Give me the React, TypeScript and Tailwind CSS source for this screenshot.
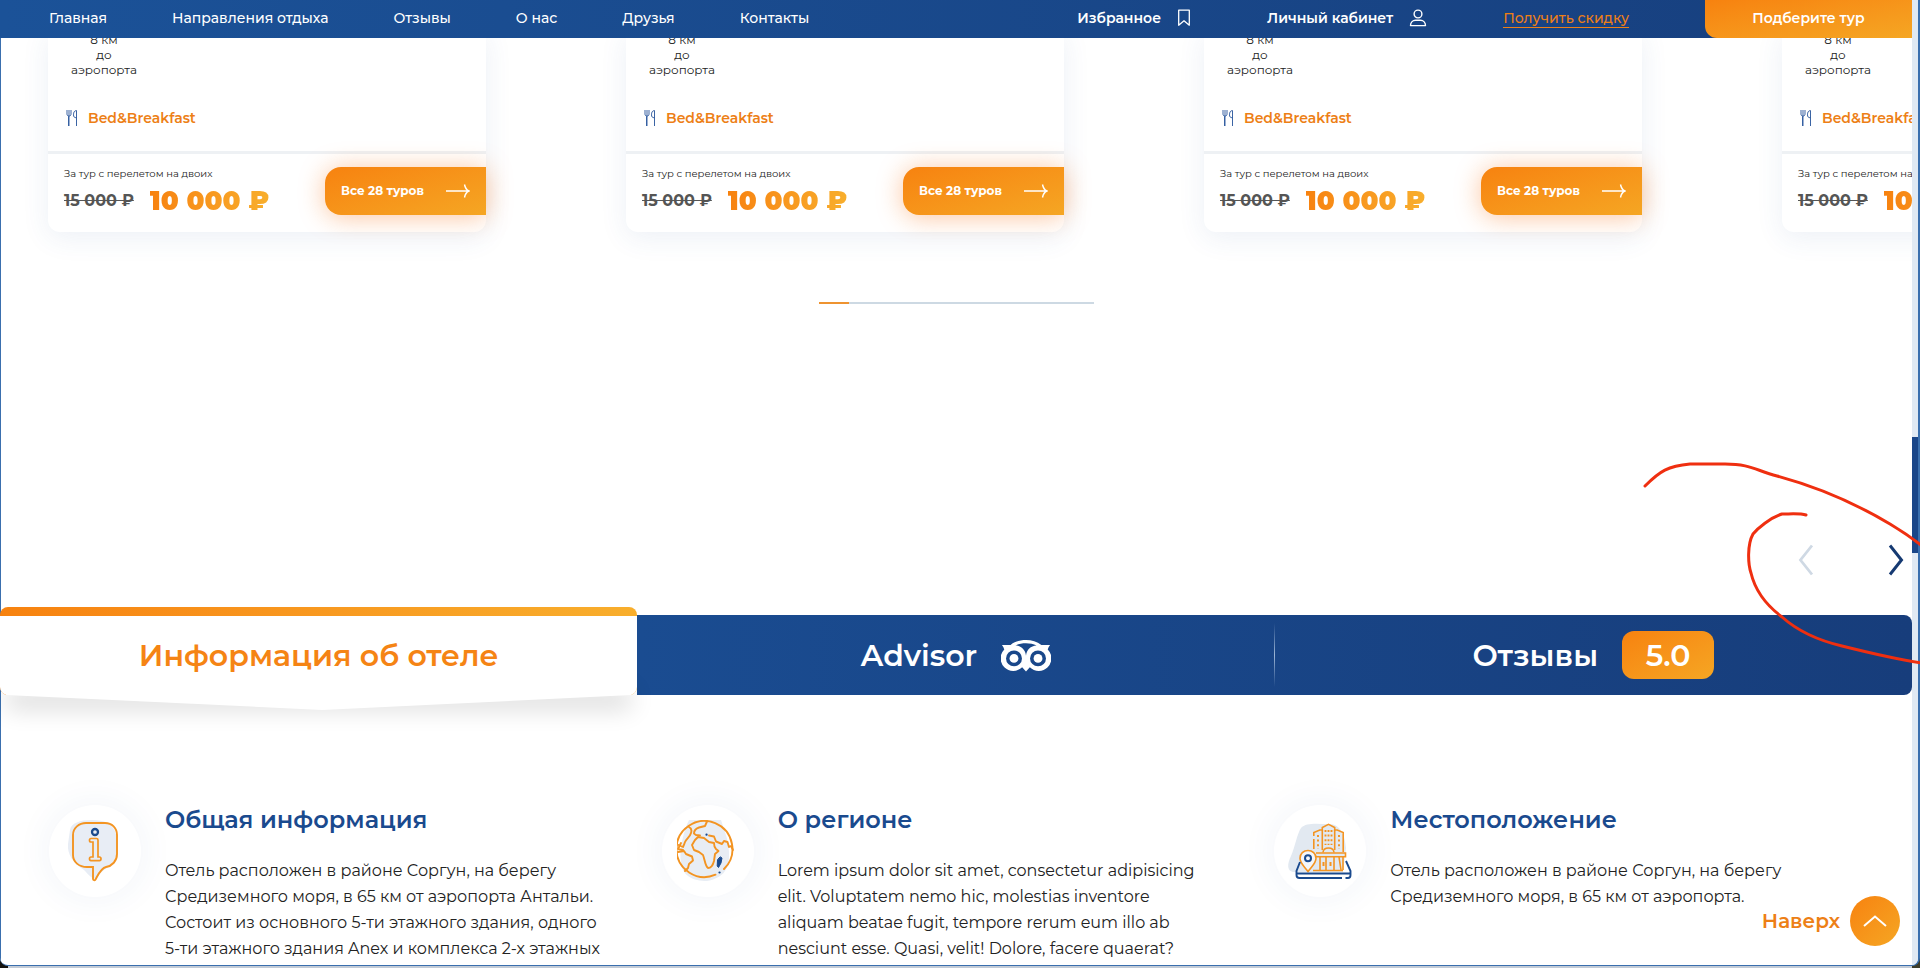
import type { ReactNode } from "react";

const NAV = ["Главная", "Направления отдыха", "Отзывы", "О нас", "Друзья", "Контакты"];

const GRADIENT = "bg-gradient-to-br from-[#f7820f] to-[#f5a623]";

function BookmarkIcon() {
  return (
    <svg className="h-[18px] w-[14px]" viewBox="0 0 14 18" fill="none" stroke="#fff" strokeWidth="1.3">
      <path d="M1.7 1.2h10.6v15L7 11.8 1.7 16.2z" strokeLinejoin="round" />
    </svg>
  );
}

function UserIcon() {
  return (
    <svg className="h-[18px] w-[18px]" viewBox="0 0 18 18" fill="none" stroke="#fff" strokeWidth="1.4">
      <circle cx="9" cy="5" r="3.9" />
      <path d="M1.5 16.6c0-3.4 2.4-5.4 5-5.4h5c2.6 0 5 2 5 5.4z" strokeLinejoin="round" />
    </svg>
  );
}

function CutleryIcon() {
  return (
    <svg className="h-4 w-3" viewBox="0 0 12 18" preserveAspectRatio="none" fill="none" stroke="#2f5a9e" strokeWidth="1">
      <path d="M1 0v4.500c0 1.500.7 2.300 2 2.300s2-.8 2-2.300V0M3 0v18M2.500 7v11" />
      <path d="M10.500 18V.6C8.300.8 7.500 2.500 7.500 5.500c0 2.200.8 3.200 3 3.200" />
    </svg>
  );
}

function ArrowIcon() {
  return (
    <svg className="h-[14px] w-6" viewBox="0 0 24 14" fill="none" stroke="#fff" strokeWidth="1.4">
      <path d="M0 7h22.500M18.500.5c.6 3.200 2 5.500 4.500 6.500-2.500 1-3.900 3.300-4.500 6.500" />
    </svg>
  );
}

function OwlIcon() {
  return (
    <svg className="h-[33px] w-[50px]" viewBox="0 0 52 34">
      <path fill="#fff" d="M1 6h9C14.500 2.500 20 .8 26 .8S37.500 2.500 42 6h9c-1.200 1.600-2 3-2.400 4.700A13 13 0 0 1 30 29.200L26 33.600l-4-4.400A13 13 0 0 1 3.400 10.700C3 9 2.200 7.600 1 6z" />
      <path fill="#19478a" d="M15 6.600C18.300 5 22 4.300 26 4.300s7.700.7 11 2.300c-6.100.2-10.500 4.800-11 10.600C25.500 11.400 21.100 6.800 15 6.600z" />
      <circle cx="13.500" cy="20" r="8.300" fill="#19478a" />
      <circle cx="38.500" cy="20" r="8.300" fill="#19478a" />
      <circle cx="13.500" cy="20" r="4.600" fill="#fff" />
      <circle cx="38.500" cy="20" r="4.600" fill="#fff" />
    </svg>
  );
}

function InfoIcon() {
  return (
    <svg className="h-[62px] w-[62px]" viewBox="0 0 62 62" fill="none" stroke="#f39422" strokeWidth="1.900">
      <path d="M6 10C7 3 16 0 28 0s21 3 24 14c3 12 2 24-6 32-4 3-9 5-13 12-4 3-9-4-13-8C9 43 3 34 4 24z" fill="#e8edf5" stroke="none" />
      <path d="M22 3h19c7 0 12 5 12 12v19c0 7-5 12-11 13-5 1-8 8-10.500 12.500-.8 1.200-2.500.9-2.500-.7V47h-6C15 47 9 42 9 35V15C9 8 15 3 22 3z" />
      <circle cx="31" cy="12" r="3" stroke="#1a4a8e" strokeWidth="2.300" />
      <path d="M27 18.500h5.500c1 0 1.500.5 1.500 1.500v17h1.500c2 0 2 3.700 0 3.700h-8.500c-2 0-2-3.700 0-3.700H29V22h-2c-2 0-2-3.500 0-3.500z" strokeWidth="1.700" />
    </svg>
  );
}

function GlobeIcon() {
  return (
    <svg className="h-[62px] w-[62px]" viewBox="0 0 62 62" fill="none" stroke="#f39422" strokeWidth="1.900" strokeLinecap="round" strokeLinejoin="round">
      <path d="M12 0h32c3 10 9 22 8 38-1 12-6 20-22 23C16 61 5 56 4 42 2 27 8 8 12 0z" fill="#e8edf4" stroke="none" />
      <path d="M38.500 54.700A28 28 0 1 1 47 49" />
      <path d="M12 7c2 1 3 3 2 6-1 4-5 6-6 9s-2 5-2 5l-4.500-2M4 23l-3 6 5 1M1 32l6-1 2 3 6 2.500 1 4-4 3.500-1 4-3 3" />
      <path d="M30 1.500L28 6l-6 1.500c-3 1-5 3-5 6l2 1.500 4 .5" />
      <path d="M18 20l3-3 6 1 5 4 5 1c0 3 0 4 2 6l2.500 2L38 34l-1 7c-1 4-3 7-6 7-3-2-3-8-5-13l-4-3-5-2-2-5z" />
      <path d="M32 15.500l5 1 2 5 6 2.500 2-3 3.500 1 1.500 5 2-1 2 4" />
      <path d="M43.500 37l1.500 1-1 5-2.500 4.500-1.300-1.500.3-6z" stroke="#1a4a8e" fill="#1a4a8e" strokeWidth="1" />
      <path d="M29.500 14.700h.1M42.500 52.500h.1" stroke="#1a4a8e" strokeWidth="2.200" />
    </svg>
  );
}

function HotelIcon() {
  return (
    <svg className="h-[62px] w-[62px] overflow-visible" viewBox="0 0 62 62" fill="none" stroke="#f39422" strokeWidth="1.600">
      <path d="M12 8c5-6 18-4 28-4 12 0 16 12 17 24L54 52H4c-6-1-6-8-2-16C6 27 8 14 12 8z" fill="#e2e9f1" stroke="none" />
      <path d="M24.800 29V19M24.800 16v-3.500l6-2.500h2.500V7.500l6.200-3.200 6.200 3.200V10h2.500l6 2.500V32" />
      <path d="M33.300 10v20M45.700 10v20" />
      <path d="M27 33h29.500v3.700H26M31 37v13M37 37v13M45 37v13M54 37v13M50 37l2 13M24 50.500h30" />
      <path d="M34 32.500c.5-6 10.500-6 11 0" />
      <path d="M36.500 10v15M39.500 10v15M42.500 10v15" strokeDasharray="2 2.600" strokeWidth="1.900" />
      <path d="M29 15v14M50 15v14" strokeDasharray="2 2.600" strokeWidth="1.900" />
      <path d="M34.500 42v4M41.500 42v4" strokeWidth="2" />
      <path d="M19 30.500c-4.500 0-8 3.200-8 7.700 0 5 4 7.800 8 13.300 4-5.500 8-8.300 8-13.300 0-4.500-3.500-7.700-8-7.700z" fill="#f3f6fa" />
      <circle cx="19" cy="38.300" r="3" stroke="#1a4a8e" strokeWidth="2" />
      <path d="M11 42L7.500 51v4c0 2 .8 3 3 3H53M8 53.500h53M56.500 58H59c1.800 0 2.500-1 2.500-3v-4L57 41" stroke="#1a4a8e" strokeWidth="1.900" />
    </svg>
  );
}

function TourCard() {
  return (
    <article className="w-[438px] shrink-0 rounded-b-xl bg-white shadow-[0_6px_28px_rgba(40,90,150,0.09)]">
      <div className="h-[121px] px-4 pt-[2px]">
        <p className="w-20 text-center text-[12px] leading-[15px] text-[#222]">
          8 км
          <br />
          до
          <br />
          аэропорта
        </p>
        <p className="mt-[31px] flex items-center gap-[10px] pl-[2px] text-[14px] leading-5 font-semibold text-[#ed7f16]">
          <CutleryIcon />
          Bed&amp;Breakfast
        </p>
      </div>
      <div className="flex h-[81px] items-start justify-between border-t-3 border-[#eef1f4] pt-[13px] pl-4">
        <div className="pt-px">
          <p className="text-[10px] leading-3 text-[#222]">За тур с перелетом на двоих</p>
          <p className="mt-[3px] flex items-center gap-4 leading-9">
            <s className="text-[16px] font-bold text-[#555]">15 000 ₽</s>
            <strong className="bg-gradient-to-r from-[#f7820f] to-[#f8ae2c] bg-clip-text text-[26px] font-black text-transparent">10 000 ₽</strong>
          </p>
        </div>
        <button className={`flex h-12 w-[161px] items-center justify-between rounded-l-2xl px-4 text-[12px] font-bold text-white shadow-[0_2px_26px_rgba(247,110,15,0.4)] ${GRADIENT}`}>
          Все 28 туров
          <ArrowIcon />
        </button>
      </div>
    </article>
  );
}

function InfoBlock({ icon, title, children }: { icon: ReactNode; title: string; children: ReactNode }) {
  return (
    <section className="flex items-start gap-6">
      <div className="flex size-[92px] shrink-0 items-center justify-center rounded-full bg-white shadow-[0_0_36px_rgba(40,90,150,0.07)]">{icon}</div>
      <div className="w-[440px]">
        <h2 className="text-[24px] leading-[30px] font-semibold text-[#1a4a8e]">{title}</h2>
        <p className="mt-[23px] text-[16px] leading-[26px] text-[#222]">{children}</p>
      </div>
    </section>
  );
}

export default function App() {
  return (
    <div className="relative h-screen overflow-hidden bg-[linear-gradient(to_right,#15130f_8px,#c3cbd6_8px,#c3cbd6_calc(100%-8px),#3d3d2a_calc(100%-8px))] pb-[2px] font-[Montserrat,Inter,sans-serif]">
      <div className="flex h-full overflow-hidden rounded-b-lg border-r-2 border-b border-[#3a6fae] bg-white">
        <div className="relative flex min-w-0 flex-1 flex-col overflow-hidden">
          <span className="absolute inset-y-0 left-0 w-px bg-[#3a6fae]" />
          <header className="relative z-10 flex h-[38px] shrink-0 items-center justify-between bg-gradient-to-r from-[#1b5298] to-[#173f7e] pl-[49px] text-[14px] text-white">
            <nav className="flex gap-[65px] pb-[2px] font-medium">
              {NAV.map((item) => (
                <a key={item} href="#">{item}</a>
              ))}
            </nav>
            <div className="flex h-full items-center gap-[76px] font-semibold">
              <a href="#" className="flex items-center gap-4 pb-[2px]">Избранное <BookmarkIcon /></a>
              <a href="#" className="flex items-center gap-4 pb-[2px]">Личный кабинет <UserIcon /></a>
              <a href="#" className="border-b border-[#ed7f16] leading-[17px] font-medium text-[#ed7f16]">Получить скидку</a>
              <button className={`h-full w-[207px] rounded-bl-xl pb-[2px] ${GRADIENT}`}>Подберите тур</button>
            </div>
          </header>

          <main className="relative -mt-2">
            <div className="flex gap-[140px] px-12">
              {[0, 1, 2, 3].map((i) => (
                <TourCard key={i} />
              ))}
            </div>
            <div className="mx-auto mt-[70px] h-[2px] w-[275px] bg-[#cdd9e3]">
              <div className="h-full w-[30px] bg-[#ee9330]" />
            </div>

            <div className="mt-60 flex justify-end gap-[74px] pr-2">
              <button aria-label="Назад">
                <svg className="h-8 w-4" viewBox="0 0 16 32" fill="none" stroke="#cfd9e4" strokeWidth="2.800"><path d="M14 1.500L2.500 16 14 30.500" /></svg>
              </button>
              <button aria-label="Вперед">
                <svg className="h-8 w-4" viewBox="0 0 16 32" fill="none" stroke="#163a72" strokeWidth="3"><path d="M2 1.500L13.500 16 2 30.500" /></svg>
              </button>
            </div>

            <div className="mt-[31px] grid grid-cols-3 text-[30px] font-semibold" role="tablist">
              <button role="tab" aria-selected="true" className="relative h-[88px] rounded-lg bg-gradient-to-r from-[#f7820f] to-[#f8ae2c] pt-[9px] text-[#f58414]">
                <svg className="absolute top-[88px] left-0 h-14 w-full overflow-visible" viewBox="0 0 637 56" preserveAspectRatio="none">
                  <path d="M6-6H631V14H6z" fill="#000" opacity=".14" className="blur-[12px]" />
                  <path d="M6-8H631V0L322 15 6 0z" fill="#fff" />
                </svg>
                <span className="relative flex h-full items-center justify-center rounded-b-lg bg-white">Информация об отеле</span>
              </button>
              <div className="col-span-2 mt-2 grid grid-cols-2 rounded-r-lg bg-gradient-to-r from-[#1a4c91] to-[#173d7b] text-white">
                <button role="tab" aria-selected="false" className="flex items-center justify-center gap-6">Advisor <OwlIcon /></button>
                <button role="tab" aria-selected="false" className="relative flex items-center justify-center gap-6">
                  <span className="absolute top-2 bottom-2 -left-px w-px bg-gradient-to-b from-transparent via-[#9db6d6] to-transparent" />
                  Отзывы
                  <span className={`flex h-12 w-[92px] items-center justify-center rounded-xl ${GRADIENT}`}>5.0</span>
                </button>
              </div>
            </div>

            <div className="mt-[110px] grid grid-cols-3 pr-[25px] pl-[49px]">
              <InfoBlock icon={<InfoIcon />} title="Общая информация">
                Отель расположен в районе Соргун, на берегу<br />Средиземного моря, в 65 км от аэропорта Антальи.<br />Состоит из основного 5-ти этажного здания, одного<br />5-ти этажного здания Anex и комплекса 2-х этажных
              </InfoBlock>
              <InfoBlock icon={<GlobeIcon />} title="О регионе">
                Lorem ipsum dolor sit amet, consectetur adipisicing<br />elit. Voluptatem nemo hic, molestias inventore<br />aliquam beatae fugit, tempore rerum eum illo ab<br />nesciunt esse. Quasi, velit! Dolore, facere quaerat?
              </InfoBlock>
              <InfoBlock icon={<HotelIcon />} title="Местоположение">
                Отель расположен в районе Соргун, на берегу<br />Средиземного моря, в 65 км от аэропорта.
              </InfoBlock>
            </div>
          </main>

          <a href="#" className="absolute right-3 bottom-[19px] flex items-center gap-[10px] text-[20px] font-semibold text-[#ed7f16]">
            Наверх
            <span className={`flex size-[50px] items-center justify-center rounded-full ${GRADIENT}`}>
              <svg className="h-3 w-6" viewBox="0 0 24 12" fill="none" stroke="#fff" strokeWidth="2"><path d="M1 11L12 1.500 23 11" /></svg>
            </span>
          </a>
        </div>
        <div className="w-[6px] bg-[#e0e9f3] pt-[437px]">
          <div className="h-[116px] bg-[#1a4689]" />
        </div>
      </div>

      <svg className="pointer-events-none absolute top-[450px] right-0 h-[220px] w-[290px]" viewBox="1630 450 290 220" fill="none" stroke="#ef2f10" strokeWidth="3" strokeLinecap="round">
        <path d="M1645 486C1660 471 1668 466 1690 464H1725C1750 464 1755 470 1777 476C1825 489 1860 506 1890 524C1905 533 1912 538 1922 546" />
        <path d="M1806 515C1800 513 1790 514 1782 514C1770 518 1758 528 1753 534C1747 545 1748 564 1751 573C1755 590 1766 605 1782 617C1800 633 1825 642 1842 646C1870 653 1895 659 1922 663" />
      </svg>
    </div>
  );
}
